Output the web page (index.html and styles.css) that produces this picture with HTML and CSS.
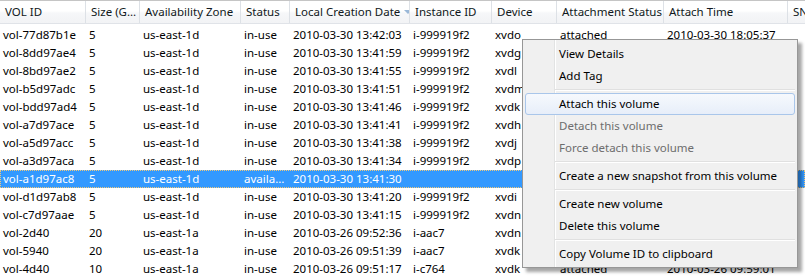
FILE: index.html
```html
<!DOCTYPE html>
<html lang="en">
<head>
    <meta charset="UTF-8">
    <title>Volumes</title>
    <link rel="stylesheet" href="styles.css">
</head>
<body>
    <!-- Volume list -->
    <div class="list">
        <div class="head cols">
            <div class="hcell">VOL ID</div>
            <div class="hcell">Size (GiB)</div>
            <div class="hcell">Availability Zone</div>
            <div class="hcell">Status</div>
            <div class="hcell sorted">Local Creation Date<span class="arrow"></span></div>
            <div class="hcell">Instance ID</div>
            <div class="hcell">Device</div>
            <div class="hcell">Attachment Status</div>
            <div class="hcell">Attach Time</div>
            <div class="hcell">SNAPSHOT</div>
        </div>
        <div class="rows" id="rows"></div>
    </div>

    <!-- Context menu -->
    <div class="menu">
        <div class="item">View Details</div>
        <div class="item">Add Tag</div>
        <div class="sep"></div>
        <div class="item hover">Attach this volume</div>
        <div class="item disabled">Detach this volume</div>
        <div class="item disabled">Force detach this volume</div>
        <div class="sep"></div>
        <div class="item">Create a new snapshot from this volume</div>
        <div class="sep"></div>
        <div class="item">Create new volume</div>
        <div class="item">Delete this volume</div>
        <div class="sep"></div>
        <div class="item">Copy Volume ID to clipboard</div>
    </div>

    <script>
        const volumes = [
            ["vol-77d87b1e", "5", "us-east-1d", "in-use", "2010-03-30 13:42:03", "i-999919f2", "xvdo", "attached", "2010-03-30 18:05:37"],
            ["vol-8dd97ae4", "5", "us-east-1d", "in-use", "2010-03-30 13:41:59", "i-999919f2", "xvdg", "attached", "2010-03-30 18:05:31"],
            ["vol-8bd97ae2", "5", "us-east-1d", "in-use", "2010-03-30 13:41:55", "i-999919f2", "xvdl", "attached", "2010-03-30 18:05:26"],
            ["vol-b5d97adc", "5", "us-east-1d", "in-use", "2010-03-30 13:41:51", "i-999919f2", "xvdm", "attached", "2010-03-30 18:05:20"],
            ["vol-bdd97ad4", "5", "us-east-1d", "in-use", "2010-03-30 13:41:46", "i-999919f2", "xvdk", "attached", "2010-03-30 18:05:14"],
            ["vol-a7d97ace", "5", "us-east-1d", "in-use", "2010-03-30 13:41:41", "i-999919f2", "xvdh", "attached", "2010-03-30 18:05:09"],
            ["vol-a5d97acc", "5", "us-east-1d", "in-use", "2010-03-30 13:41:38", "i-999919f2", "xvdj", "attached", "2010-03-30 18:05:03"],
            ["vol-a3d97aca", "5", "us-east-1d", "in-use", "2010-03-30 13:41:34", "i-999919f2", "xvdp", "attached", "2010-03-30 18:04:58"],
            ["vol-a1d97ac8", "5", "us-east-1d", "available", "2010-03-30 13:41:30", "", "", "", ""],
            ["vol-d1d97ab8", "5", "us-east-1d", "in-use", "2010-03-30 13:41:20", "i-999919f2", "xvdi", "attached", "2010-03-30 18:04:51"],
            ["vol-c7d97aae", "5", "us-east-1d", "in-use", "2010-03-30 13:41:15", "i-999919f2", "xvdn", "attached", "2010-03-30 18:04:45"],
            ["vol-2d40", "20", "us-east-1a", "in-use", "2010-03-26 09:52:36", "i-aac7", "xvdn", "attached", "2010-03-26 10:01:12"],
            ["vol-5940", "20", "us-east-1a", "in-use", "2010-03-26 09:51:39", "i-aac7", "xvdk", "attached", "2010-03-26 10:00:40"],
            ["vol-4d40", "10", "us-east-1a", "in-use", "2010-03-26 09:51:17", "i-c764", "xvdk", "attached", "2010-03-26 09:59:01"]
        ];
        const selected = 8;

        const rows = document.getElementById("rows");
        volumes.forEach(function (vol, i) {
            const row = document.createElement("div");
            row.className = "row cols" + (i === selected ? " selected" : "");
            vol.concat([""]).forEach(function (value) {
                const cell = document.createElement("div");
                cell.className = "cell";
                cell.textContent = value;
                row.appendChild(cell);
            });
            rows.appendChild(row);
        });
    </script>
</body>
</html>
```

FILE: styles.css
```css
/* Page */
body {
    margin: 0;
    background-color: #fff;
    font-family: "Noto Sans", "Liberation Sans", sans-serif;
    font-size: 11.5px;
    color: #000;
    overflow: hidden;
}

/* Shared column layout for header and rows */
.cols {
    display: grid;
    grid-template-columns: 86px 54px 101px 49px 120px 82px 65px 107px 124px 1fr;
}

/* Header */
.head {
    height: 22px;
    border-top: 1px solid #c5c5c5;
    border-bottom: 1px solid #e0e3e8;
    background: linear-gradient(#ffffff, #ffffff 45%, #f6f7f9 55%, #f2f3f5);
}

.hcell {
    padding: 3px 0 0 5px;
    border-right: 1px solid #dde1e6;
    white-space: nowrap;
    overflow: hidden;
    text-overflow: ellipsis;
    color: #101820;
}

.hcell:last-child {
    border-right: none;
    text-overflow: clip;
}

.sorted {
    display: flex;
}

.arrow {
    margin: 6px 0 0 4px;
    width: 0;
    height: 0;
    border-left: 4px solid transparent;
    border-right: 4px solid transparent;
    border-top: 4px solid #9ab8d8;
}

/* Rows */
.rows {
    padding-top: 2px;
}

.row {
    height: 18px;
    line-height: 18px;
}

.cell {
    padding-left: 3px;
    white-space: nowrap;
    overflow: hidden;
    text-overflow: ellipsis;
}

.row.selected {
    background-color: #3399ff;
    color: #fff;
    outline: 1px dotted #f0c87a;
    outline-offset: -1px;
}

/* Context menu */
.menu {
    position: absolute;
    left: 522px;
    top: 39px;
    width: 270px;
    padding: 3px 2px 2px;
    border: 1px solid #979797;
    background-color: #f0f0f0;
    background-image: linear-gradient(to right, transparent 31px, #e2e3e3 31px, #e2e3e3 32px, #ffffff 32px, #ffffff 33px, transparent 33px);
    box-shadow: 4px 4px 3px rgba(0, 0, 0, 0.35);
}

.item {
    height: 22px;
    line-height: 20px;
    padding-left: 33px;
    border: 1px solid transparent;
    box-sizing: border-box;
    white-space: nowrap;
}

.item.hover {
    border-color: #a9c6ea;
    border-radius: 3px;
    background: linear-gradient(#f6f9fd, #e7eef9);
}

.item.disabled {
    color: #6d6d6d;
}

.sep {
    height: 1px;
    margin: 2px 0 2px 30px;
    background-color: #e0e0e0;
    border-bottom: 1px solid #ffffff;
}
```
